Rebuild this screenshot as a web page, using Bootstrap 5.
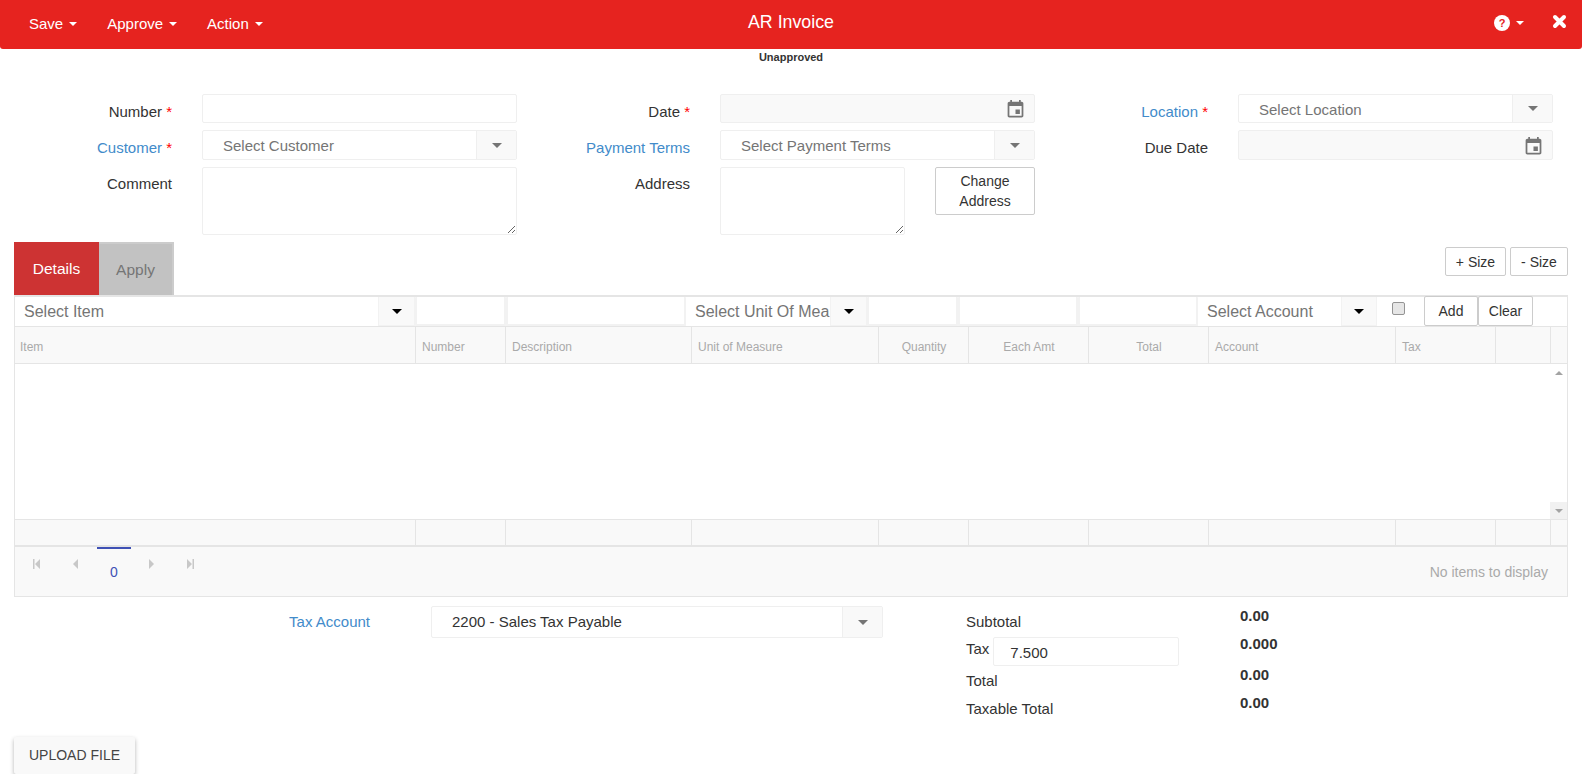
<!DOCTYPE html>
<html lang="en">
<head>
    <meta charset="UTF-8">
    <title>AR Invoice</title>
    <link href="https://cdn.jsdelivr.net/npm/bootstrap@5.3.0/dist/css/bootstrap.min.css" rel="stylesheet">
    <style>
        body { font-family: "Liberation Sans", Arial, sans-serif; font-size: 15px; color: #333; background: #fff; }
        .app-bar { height: 49px; background: #e6231f; color: #fff; border-radius: 0 0 3px 3px; padding: 0 15px 0 14px; }
        .app-bar .nav-link { color: #fff; font-size: 15px; padding: 0 15px; }
        .app-bar .dropdown-toggle::after { margin-left: 6px; vertical-align: 3px; border-top-width: 4px; border-left-width: 4px; border-right-width: 4px; }
        .help-link { margin-top: -4px; }
        .close-icon { margin-top: -6px; margin-left: 13px; }
        .bar-title { font-size: 17.8px; position: absolute; left: 0; right: 0; top: 9px; text-align: center; pointer-events: none; }
        .status-text { font-size: 11px; font-weight: 700; line-height: 14px; text-align: center; margin-top: 1px; }
        .form-area { display: grid; grid-template-columns: 202px 315px 203px 315px 203px 315px; grid-template-rows: 29px 30px 68px; row-gap: 7px; margin-top: 30px; }
        .lbl { text-align: right; padding-right: 30px; padding-top: 8px; line-height: 20px; }
        .lbl-top { padding-top: 7px; }
        .lbl-link { color: #428bca; }
        .req { color: #f00; }
        .fld { border: 1px solid #efefef; border-radius: 2px; background: #fff; min-width: 0; }
        .fld-off { background: #f9f9f9; }
        .pick-text { color: #757575; font-size: 15px; padding-left: 20px; flex: 1; line-height: 29px; white-space: nowrap; overflow: hidden; }
        .pick-arrow { width: 40px; background: #f9f9f9; border-left: 1px solid #efefef; }
        .tri { width: 0; height: 0; border-left: 5px solid transparent; border-right: 5px solid transparent; border-top: 5px solid #757575; }
        .tri-dark { border-top-color: #000; border-left-width: 5.5px; border-right-width: 5.5px; }
        .cal-icon { width: 21px; height: 21px; fill: #757575; margin-right: 8px; margin-top: 2px; }
        textarea.fld { display: block; width: 100%; height: 68px; outline: 0; }
        .addr-wrap { display: flex; gap: 30px; align-items: flex-start; }
        .addr-wrap textarea { width: 185px; flex: none; }
        .plain-btn { background: #fff; border: 1px solid #ccc; border-radius: 2px; color: #333; font-size: 14px; line-height: 20px; padding: 0; text-align: center; }
        .addr-btn { width: 100px; height: 48px; padding: 0 6px 1px; }
        .tab-row { margin: 7px 14px 0; }
        .tab-on { width: 85px; height: 53px; line-height: 53px; background: #cd3333; color: #fff; text-align: center; font-size: 15.5px; }
        .tab-off { width: 75px; height: 53px; line-height: 51px; background: #c2c2c2; color: #757575; border: 2px solid #ccc; border-bottom: 0; border-left: 0; text-align: center; font-size: 15.5px; }
        .size-btn { height: 29px; width: 61px; margin-left: 4px; margin-top: 5px; }
        .size-btn-b { width: 58px; }
        .grid-box { margin: 0 14px; border: 1px solid #e5e5e5; border-top-width: 2px; }
        .tool-row { display: grid; grid-template-columns: 363px 37px 91px 180px 144px 37px 91px 120px 120px 143px 36px 47px 54px 55px; height: 30px; border-bottom: 1px solid #e5e5e5; }
        .tool-sel { color: #757575; font-size: 16px; line-height: 30px; padding-left: 9px; white-space: nowrap; overflow: hidden; }
        .tool-arrow { background: #f9f9f9; height: 29px; border: 1px solid #f2f2f2; border-top: 0; }
        .tool-input { border: 2px solid #f2f2f2; border-top: 0; border-radius: 1px; height: 29px; background: #fff; }
        .tool-chk { appearance: none; margin: 5px 0 0 15px; width: 13px; height: 13px; display: block; background: #e6e6e6; border: 1px solid #949494; border-radius: 2px; }
        .tool-btn { height: 30px; margin-top: -1px; }
        .cols-row { display: grid; grid-template-columns: 400px 90px 186px 187px 90px 120px 120px 187px 100px 55px 1fr; background: #f9f9f9; }
        .cols-head { height: 37px; grid-template-rows: 36px; border-bottom: 1px solid #e5e5e5; font-size: 12px; color: #aaa; line-height: 40px; }
        .cols-foot { height: 28px; border-bottom: 2px solid #e5e5e5; border-top: 1px solid #e5e5e5; }
        .cols-row > div { border-left: 1px solid #e5e5e5; padding: 0 5px 0 6px; white-space: nowrap; }
        .cols-row > div:first-child { border-left: 0; padding-left: 5px; }
        .cols-mid { text-align: center; }
        .grid-body { height: 155px; display: flex; justify-content: flex-end; }
        .fake-scroll { width: 17px; }
        .scroll-up, .scroll-down { height: 17px; }
        .scroll-down { background: #f1f1f1; }
        .tri-up { border-top: 0; border-bottom: 4px solid #a3a3a3; border-left-width: 4px; border-right-width: 4px; }
        .tri-down { border-top: 4px solid #a3a3a3; border-left-width: 4px; border-right-width: 4px; }
        .pager-row { height: 49px; background: #f9f9f9; padding-left: 18px; padding-right: 19px; color: #aaa; }
        .pg-icon { width: 7px; height: 10px; fill: #c8c8c8; margin-top: 10px; }
        .pg-cell { width: 39px; }
        .pg-short { width: 24px; }
        .pg-num { width: 34px; border-top: 2px solid #3f51b5; color: #3f51b5; text-align: center; padding-top: 13px; line-height: 20px; margin: 0 1px; font-size: 14px; }
        .none-text { padding-top: 15px; line-height: 20px; font-size: 14px; }
        .bottom-area { display: grid; grid-template-columns: 431px 452px 83px 276px; margin-top: 9px; height: 131px; }
        .tax-lbl { text-align: right; padding: 6px 61px 0 0; line-height: 20px; }
        .tax-pick .pick-text { color: #333; line-height: 30px; }
        .sum-col { width: 274px; flex: none; padding-top: 6px; }
        .sum-lbl { line-height: 20px; white-space: nowrap; display: flex; }
        .sum-1 { height: 27px; }
        .sum-2 { height: 32px; }
        .sum-3 { height: 28px; }
        .sum-input { width: 186px; height: 29px; margin-left: 4px; padding-left: 16px; line-height: 29px; margin-top: -2px; }
        .sum-vals { padding-top: 1px; flex: none; }
        .sum-val { font-weight: 700; line-height: 18px; }
        .val-tall { height: 31px; }
        .upload-btn { background: #f9f9f9; color: #444; border: 0; border-radius: 2px; width: 121px; height: 37px; margin-left: 14px; box-shadow: 0 2px 4px rgba(0,0,0,.3); font-size: 14px; padding: 0; }
    </style>
</head>
<body>
    <div class="app-bar d-flex align-items-center justify-content-between position-relative">
        <div class="nav">
            <a class="nav-link dropdown-toggle" href="#">Save</a>
            <a class="nav-link dropdown-toggle" href="#">Approve</a>
            <a class="nav-link dropdown-toggle" href="#">Action</a>
        </div>
        <div class="bar-title">AR Invoice</div>
        <div class="d-flex align-items-center">
            <a class="nav-link dropdown-toggle d-flex align-items-center help-link" href="#">
                <svg width="16" height="16" viewBox="0 0 16 16"><circle cx="8" cy="8" r="8" fill="#fff"/><text x="8" y="12" text-anchor="middle" font-family="Liberation Sans" font-weight="700" font-size="11" fill="#e6231f">?</text></svg>
            </a>
            <svg class="close-icon" width="15" height="15" viewBox="0 0 15 15"><path d="M3 3 L12 12 M12 3 L3 12" stroke="#fff" stroke-width="4" stroke-linecap="round" fill="none"/></svg>
        </div>
    </div>
    <div class="status-text">Unapproved</div>

    <div class="form-area">
        <div class="lbl">Number <span class="req">*</span></div>
        <div class="fld"></div>
        <div class="lbl">Date <span class="req">*</span></div>
        <div class="fld fld-off d-flex align-items-center justify-content-end">
            <svg class="cal-icon" viewBox="0 0 24 24"><path d="M17 12h-5v5h5v-5zM16 1v2H8V1H6v2H5c-1.11 0-1.99.9-1.99 2L3 19c0 1.1.89 2 2 2h14c1.1 0 2-.9 2-2V5c0-1.1-.9-2-2-2h-1V1h-2zm3 18H5V8h14v11z"/></svg>
        </div>
        <div class="lbl"><span class="lbl-link">Location</span> <span class="req">*</span></div>
        <div class="fld d-flex">
            <div class="pick-text">Select Location</div>
            <div class="pick-arrow d-flex align-items-center justify-content-center"><div class="tri"></div></div>
        </div>

        <div class="lbl"><span class="lbl-link">Customer</span> <span class="req">*</span></div>
        <div class="fld d-flex">
            <div class="pick-text">Select Customer</div>
            <div class="pick-arrow d-flex align-items-center justify-content-center"><div class="tri"></div></div>
        </div>
        <div class="lbl"><span class="lbl-link">Payment Terms</span></div>
        <div class="fld d-flex">
            <div class="pick-text">Select Payment Terms</div>
            <div class="pick-arrow d-flex align-items-center justify-content-center"><div class="tri"></div></div>
        </div>
        <div class="lbl">Due Date</div>
        <div class="fld fld-off d-flex align-items-center justify-content-end">
            <svg class="cal-icon" viewBox="0 0 24 24"><path d="M17 12h-5v5h5v-5zM16 1v2H8V1H6v2H5c-1.11 0-1.99.9-1.99 2L3 19c0 1.1.89 2 2 2h14c1.1 0 2-.9 2-2V5c0-1.1-.9-2-2-2h-1V1h-2zm3 18H5V8h14v11z"/></svg>
        </div>

        <div class="lbl lbl-top">Comment</div>
        <div><textarea class="fld"></textarea></div>
        <div class="lbl lbl-top">Address</div>
        <div class="addr-wrap">
            <textarea class="fld"></textarea>
            <button class="plain-btn addr-btn">Change Address</button>
        </div>
    </div>

    <div class="tab-row d-flex justify-content-between">
        <div class="d-flex">
            <div class="tab-on">Details</div>
            <div class="tab-off">Apply</div>
        </div>
        <div class="d-flex align-items-start">
            <button class="plain-btn size-btn">+ Size</button>
            <button class="plain-btn size-btn size-btn-b">- Size</button>
        </div>
    </div>

    <div class="grid-box">
        <div class="tool-row">
            <div class="tool-sel">Select Item</div>
            <div class="tool-arrow d-flex align-items-center justify-content-center"><div class="tri tri-dark"></div></div>
            <div class="tool-input"></div>
            <div class="tool-input"></div>
            <div class="tool-sel">Select Unit Of Mea</div>
            <div class="tool-arrow d-flex align-items-center justify-content-center"><div class="tri tri-dark"></div></div>
            <div class="tool-input"></div>
            <div class="tool-input"></div>
            <div class="tool-input"></div>
            <div class="tool-sel">Select Account</div>
            <div class="tool-arrow d-flex align-items-center justify-content-center"><div class="tri tri-dark"></div></div>
            <div><input class="tool-chk" type="checkbox"></div>
            <button class="plain-btn tool-btn">Add</button>
            <button class="plain-btn tool-btn">Clear</button>
        </div>
        <div class="cols-row cols-head">
            <div>Item</div>
            <div>Number</div>
            <div>Description</div>
            <div>Unit of Measure</div>
            <div class="cols-mid">Quantity</div>
            <div class="cols-mid">Each Amt</div>
            <div class="cols-mid">Total</div>
            <div>Account</div>
            <div>Tax</div>
            <div></div>
            <div></div>
        </div>
        <div class="grid-body">
            <div class="fake-scroll d-flex flex-column justify-content-between">
                <div class="scroll-up d-flex align-items-center justify-content-center"><div class="tri tri-up"></div></div>
                <div class="scroll-down d-flex align-items-center justify-content-center"><div class="tri tri-down"></div></div>
            </div>
        </div>
        <div class="cols-row cols-foot">
            <div></div><div></div><div></div><div></div><div></div><div></div><div></div><div></div><div></div><div></div><div></div>
        </div>
        <div class="pager-row d-flex justify-content-between">
            <div class="d-flex">
                <div class="pg-cell"><svg class="pg-icon" viewBox="0 0 7 10"><path d="M0 0h1.500v10H0zM7 0v10L2 5z"/></svg></div>
                <div class="pg-short"><svg class="pg-icon" viewBox="0 0 7 10"><path d="M6 0v10L1 5z"/></svg></div>
                <div class="pg-num">0</div>
                <div class="pg-cell text-center"><svg class="pg-icon" viewBox="0 0 7 10"><path d="M1 0v10l5-5z"/></svg></div>
                <div class="pg-cell text-center"><svg class="pg-icon" viewBox="0 0 7 10"><path d="M0 0v10l5-5zM5.500 0H7v10H5.500z"/></svg></div>
            </div>
            <div class="none-text">No items to display</div>
        </div>
    </div>

    <div class="bottom-area">
        <div class="tax-lbl lbl-link">Tax Account</div>
        <div class="fld tax-pick d-flex align-self-start">
            <div class="pick-text">2200 - Sales Tax Payable</div>
            <div class="pick-arrow d-flex align-items-center justify-content-center"><div class="tri"></div></div>
        </div>
        <div></div>
        <div class="d-flex">
            <div class="sum-col">
                <div class="sum-lbl sum-1">Subtotal</div>
                <div class="sum-lbl sum-2">Tax<div class="fld sum-input">7.500</div></div>
                <div class="sum-lbl sum-3">Total</div>
                <div class="sum-lbl">Taxable Total</div>
            </div>
            <div class="sum-vals">
                <div class="sum-val sum-3">0.00</div>
                <div class="sum-val val-tall">0.000</div>
                <div class="sum-val sum-3">0.00</div>
                <div class="sum-val">0.00</div>
            </div>
        </div>
    </div>

    <button class="upload-btn">UPLOAD FILE</button>

    <script src="https://cdn.jsdelivr.net/npm/bootstrap@5.3.0/dist/js/bootstrap.bundle.min.js"></script>
</body>
</html>
